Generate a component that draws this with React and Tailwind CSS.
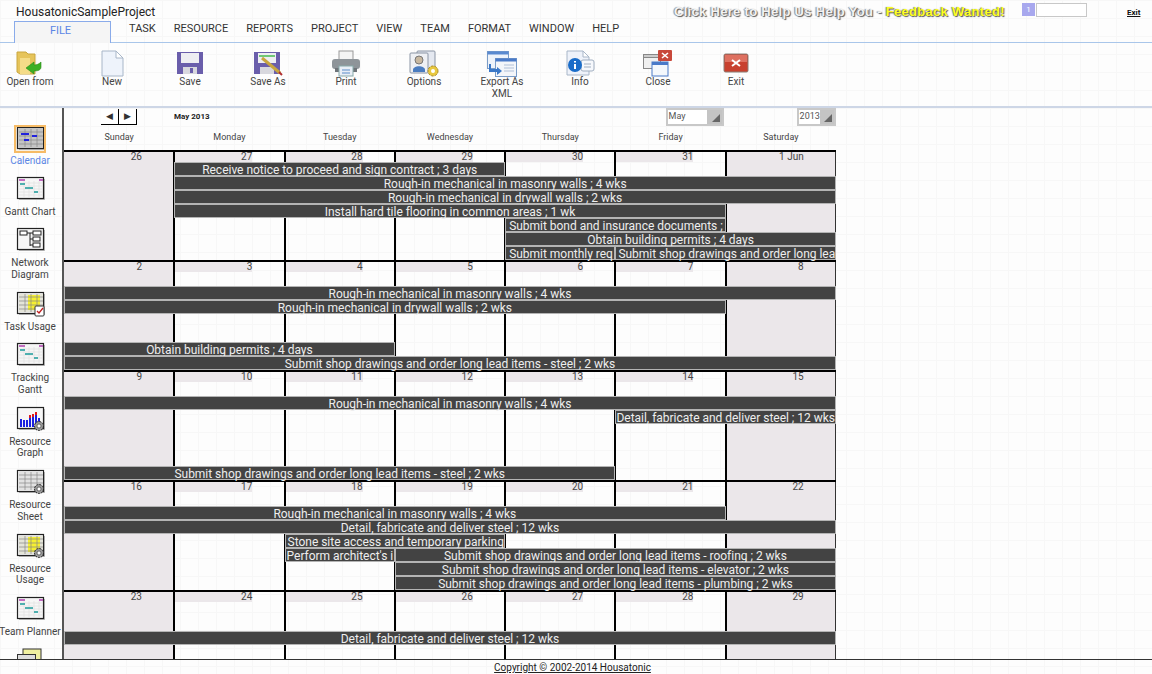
const menus = ["TASK", "RESOURCE", "REPORTS", "PROJECT", "VIEW", "TEAM", "FORMAT", "WINDOW", "HELP"];
const days = ["Sunday", "Monday", "Tuesday", "Wednesday", "Thursday", "Friday", "Saturday"];

const masonry = "Rough-in mechanical in masonry walls ; 4 wks";
const drywall = "Rough-in mechanical in drywall walls ; 2 wks";
const permits = "Obtain building permits ; 4 days";
const steel = "Submit shop drawings and order long lead items - steel ; 2 wks";
const detail = "Detail, fabricate and deliver steel ; 12 wks";

const colStart = ["col-start-1", "col-start-2", "col-start-3", "col-start-4", "col-start-5", "col-start-6", "col-start-7"];
const colSpan = ["", "col-span-1", "col-span-2", "col-span-3", "col-span-4", "col-span-5", "col-span-6", "col-span-7"];
const rowStart = ["row-start-2", "row-start-3", "row-start-4", "row-start-5", "row-start-6", "row-start-7", "row-start-8"];

// [slot, first column, span, text, left padding when left aligned]
const weeks = [
  {
    dates: ["26", "27", "28", "29", "30", "31", "1 Jun"],
    bars: [
      [0, 1, 3, "Receive notice to proceed and sign contract ; 3 days"],
      [1, 1, 6, masonry],
      [2, 1, 6, drywall],
      [3, 1, 5, "Install hard tile flooring in common areas ; 1 wk"],
      [4, 4, 2, "Submit bond and insurance documents ;", "pl-[3px] text-left"],
      [5, 4, 3, permits],
      [6, 4, 1, "Submit monthly req", "pl-[3px] text-left"],
      [6, 5, 2, "Submit shop drawings and order long lea", "pl-[2px] text-left"],
    ],
  },
  {
    dates: ["2", "3", "4", "5", "6", "7", "8"],
    bars: [
      [1, 0, 7, masonry],
      [2, 0, 6, drywall],
      [5, 0, 3, permits],
      [6, 0, 7, steel],
    ],
  },
  {
    dates: ["9", "10", "11", "12", "13", "14", "15"],
    bars: [
      [1, 0, 7, masonry],
      [2, 5, 2, detail],
      [6, 0, 5, steel],
    ],
  },
  {
    dates: ["16", "17", "18", "19", "20", "21", "22"],
    bars: [
      [1, 0, 6, masonry],
      [2, 0, 7, detail],
      [3, 2, 2, "Stone site access and temporary parking", "pl-[2px] text-left"],
      [4, 2, 1, "Perform architect's i", "pl-[1px] text-left"],
      [4, 3, 4, "Submit shop drawings and order long lead items - roofing ; 2 wks"],
      [5, 3, 4, "Submit shop drawings and order long lead items - elevator ; 2 wks"],
      [6, 3, 4, "Submit shop drawings and order long lead items - plumbing ; 2 wks"],
    ],
  },
  {
    dates: ["23", "24", "25", "26", "27", "28", "29"],
    rows: "grid-rows-[10px_14px_15px_repeat(5,14px)]",
    bars: [[2, 0, 7, detail]],
  },
];

const Frame = ({ children, className }) => (
  <svg width="30" height="26" viewBox="0 0 30 26" className={className}>
    <rect x="2.5" y="1.5" width="26" height="21" fill="#f6f6f6" stroke="#222" strokeWidth="1.2" />
    <path d="M4 23.5h25.5V3" fill="none" stroke="#aaa" />
    {children}
  </svg>
);

const GanttLines = () => (
  <>
    <path d="M4 4h6M24 4h4" stroke="#b040b0" strokeWidth="1.5" />
    <path d="M4 7h24M4 10h24M4 13h24M4 16h24M4 19h24M9 5v16M14 5v16M19 5v16M24 5v16" stroke="#ddd" strokeWidth=".6" />
    <path d="M5 8h5M10 12h8M19 16h4" stroke="#1a9a9a" strokeWidth="1.6" />
  </>
);

const GridLines = ({ h = 18 }) => (
  <path d={`M4 6h24M4 10h24M4 14h24M4 18h24M10 3v${h}M16 3v${h}M22 3v${h}`} stroke="#888" strokeWidth=".7" />
);

const Gear = () => (
  <g>
    <circle cx="24" cy="20" r="4.5" fill="#999" stroke="#222" strokeDasharray="2 1" />
    <circle cx="24" cy="20" r="2" fill="#fff" stroke="#333" strokeWidth=".6" />
  </g>
);

const sideItems = [
  {
    label: ["Calendar"],
    active: true,
    icon: (
      <Frame className="mt-[2px] outline-2 -outline-offset-1 outline-[#f6bb66] bg-[#f6f0e4]">
        <rect x="3" y="2" width="25" height="20" fill="#c4c4c4" />
        <GridLines />
        <path d="M6 8h8M17 10h5M9 14h5" stroke="#2222dd" strokeWidth="2" />
      </Frame>
    ),
  },
  { label: ["Gantt Chart"], icon: <Frame><GanttLines /></Frame> },
  {
    label: ["Network", "Diagram"],
    icon: (
      <Frame>
        <path d="M12 6h7M15 6v13M15 12h4M15 18h4" stroke="#222" fill="none" />
        <g fill="#fff" stroke="#222">
          <rect x="5" y="4" width="7" height="4" />
          <rect x="18" y="4" width="8" height="4" />
          <rect x="18" y="10" width="7" height="4" />
          <rect x="18" y="16" width="7" height="4" />
        </g>
      </Frame>
    ),
  },
  {
    label: ["Task Usage"],
    icon: (
      <Frame>
        <rect x="4" y="3" width="24" height="18" fill="#e4e4d8" />
        <rect x="13" y="4" width="12" height="15" fill="#f6f030" />
        <GridLines />
        <rect x="20" y="15" width="9" height="10" rx="1" fill="#fff" stroke="#333" />
        <path d="M22 20l2 2 4-5" fill="none" stroke="#c02020" strokeWidth="1.3" />
      </Frame>
    ),
  },
  { label: ["Tracking", "Gantt"], icon: <Frame><GanttLines /></Frame> },
  {
    label: ["Resource", "Graph"],
    icon: (
      <Frame>
        <path d="M6 13v8M9 14v7M12 14v7M15 11v10M18 10v11" stroke="#1a20e0" strokeWidth="2" />
        <path d="M15 9v3M18 8v3" stroke="#e01818" strokeWidth="2" />
        <path d="M21 8v13M24 12v9" stroke="#1a20e0" strokeWidth="2" />
        <path d="M21 6v3" stroke="#e01818" strokeWidth="2" />
        <Gear />
      </Frame>
    ),
  },
  {
    label: ["Resource", "Sheet"],
    icon: (
      <Frame>
        <rect x="3" y="2" width="25" height="20" fill="#e2e2e2" />
        <GridLines />
        <Gear />
      </Frame>
    ),
  },
  {
    label: ["Resource", "Usage"],
    icon: (
      <Frame>
        <rect x="4" y="3" width="24" height="18" fill="#e4e4d8" />
        <rect x="13" y="4" width="12" height="15" fill="#f6f030" />
        <GridLines />
        <Gear />
      </Frame>
    ),
  },
  { label: ["Team Planner"], icon: <Frame><GanttLines /></Frame> },
  {
    label: [""],
    icon: (
      <svg width="30" height="26" viewBox="0 0 30 26">
        <rect x="8" y="1" width="18" height="22" fill="#f0f0a0" stroke="#333" />
        <rect x="2.5" y="6.5" width="18" height="16" fill="#ddd" stroke="#333" />
      </svg>
    ),
  },
];

const ribbon = [
  {
    label: ["Open from"],
    w: "w-[60px]",
    icon: (
      <svg width="30" height="30" viewBox="0 0 30 30">
        <path d="M2 3h9l2 2h7v20H5L2 23z" fill="#e6c45a" stroke="#c9a63e" />
        <path d="M5 9h10v16H5z" fill="#f4dc88" />
        <path d="M26 13v5c0 3-3 4-7 4v3l-8-6 8-6v3c3 0 5-1 7-3z" fill="#3cb025" stroke="#2a8a1a" strokeWidth=".6" />
      </svg>
    ),
  },
  {
    label: ["New"],
    icon: (
      <svg width="30" height="30" viewBox="0 0 30 30">
        <path d="M5 2h14l7 7v18H5z" fill="#eef3fb" stroke="#a8b6c8" />
        <path d="M19 2v7h7z" fill="#fff" stroke="#a8b6c8" />
      </svg>
    ),
  },
  {
    label: ["Save"],
    icon: (
      <svg width="30" height="30" viewBox="0 0 30 30">
        <path d="M2 3h26v22H2z" fill="#6a5eab" />
        <rect x="6" y="4" width="18" height="10" fill="#eeeef2" />
        <rect x="8" y="18" width="14" height="7" fill="#d8d8de" />
        <rect x="15" y="19" width="3" height="5" fill="#6a5eab" />
      </svg>
    ),
  },
  {
    label: ["Save As"],
    icon: (
      <svg width="32" height="30" viewBox="0 0 32 30">
        <path d="M2 3h26v22H2z" fill="#6a5eab" />
        <rect x="6" y="4" width="18" height="10" fill="#eeeef2" />
        <rect x="7" y="6" width="16" height="2" fill="#70c878" />
        <rect x="8" y="18" width="14" height="7" fill="#d8d8de" />
        <path d="M10 9l18 15" stroke="#c9a63e" strokeWidth="3" />
        <path d="M27 23l3 3" stroke="#b03030" strokeWidth="2" />
      </svg>
    ),
  },
  {
    label: ["Print"],
    icon: (
      <svg width="30" height="30" viewBox="0 0 30 30">
        <rect x="8" y="2" width="14" height="9" fill="#f4f4f4" stroke="#999" />
        <rect x="1" y="10" width="28" height="10" rx="3" fill="#8e9499" />
        <rect x="4" y="19" width="22" height="4" fill="#6e7479" />
        <rect x="8" y="17" width="14" height="10" fill="#e8eef6" stroke="#8aa" />
        <path d="M11 21h8M11 24h8" stroke="#5a8cc8" />
      </svg>
    ),
  },
  {
    label: ["Options"],
    icon: (
      <svg width="32" height="30" viewBox="0 0 32 30">
        <rect x="9" y="2" width="18" height="18" rx="1" fill="#e4e8f0" stroke="#8a94a4" />
        <rect x="2" y="4" width="18" height="20" rx="1" fill="#eef0f4" stroke="#8a94a4" />
        <circle cx="11" cy="11" r="4" fill="#c8b8a0" stroke="#777" />
        <path d="M5 21c0-5 12-5 12 0v2H5z" fill="#4a7cc0" />
        <circle cx="25" cy="22" r="5" fill="#e8c840" stroke="#a88a20" strokeDasharray="2.5 1" />
        <circle cx="25" cy="22" r="2" fill="#fff" />
      </svg>
    ),
  },
  {
    label: ["Export As", "XML"],
    icon: (
      <svg width="32" height="30" viewBox="0 0 32 30">
        <rect x="1.5" y="2.5" width="21" height="17" fill="#eef3fa" stroke="#7a9cc8" />
        <rect x="1.5" y="2.5" width="21" height="3" fill="#5a8ad0" />
        <rect x="9.5" y="9.5" width="21" height="18" fill="#f4f6fa" stroke="#7a9cc8" />
        <rect x="9.5" y="9.5" width="21" height="3" fill="#4a7ac8" />
        <path d="M5 15v5h6v-2l5 4-5 4v-3H3v-8z" fill="#3a78c8" />
        <path d="M18 16h10M18 19h10M18 22h10" stroke="#b0c0d8" />
      </svg>
    ),
  },
  {
    label: ["Info"],
    icon: (
      <svg width="32" height="30" viewBox="0 0 32 30">
        <path d="M3 2h16l6 6v18H3z" fill="#eef2fa" stroke="#a8b6c8" />
        <path d="M19 2v6h6z" fill="#fff" stroke="#a8b6c8" />
        <rect x="17" y="11" width="13" height="11" rx="2" fill="#f6f8fc" stroke="#a0aec0" />
        <path d="M20 15h7M20 18h7" stroke="#a0aec0" />
        <circle cx="11" cy="16" r="7" fill="#1a6cc8" />
        <path d="M11 15v5M11 12v1.4" stroke="#fff" strokeWidth="2" />
      </svg>
    ),
  },
  {
    label: ["Close"],
    icon: (
      <svg width="32" height="30" viewBox="0 0 32 30">
        <rect x="1.5" y="5.5" width="17" height="14" fill="#f0f0f0" stroke="#888" />
        <rect x="1.5" y="5.5" width="17" height="3" fill="#ccc" stroke="#888" />
        <rect x="10" y="13" width="16" height="14" fill="#f4f8fc" stroke="#4a7ac8" />
        <rect x="10" y="13" width="16" height="3" fill="#4a7ac8" />
        <rect x="16" y="1" width="14" height="11" rx="1" fill="#c8483a" />
        <path d="M20 4l6 5M26 4l-6 5" stroke="#fff" strokeWidth="1.6" />
      </svg>
    ),
  },
  {
    label: ["Exit"],
    icon: (
      <svg width="30" height="30" viewBox="0 0 30 30">
        <rect x="3" y="5" width="24" height="18" rx="1.5" fill="#c8402e" stroke="#8a8078" />
        <rect x="4" y="6" width="22" height="7" fill="#de7060" />
        <path d="M11 11l8 6M19 11l-8 6" stroke="#fff" strokeWidth="2" />
      </svg>
    ),
  },
];

const Week = ({ week }) => (
  <div className={`grid grid-cols-7 ${week.rows || "grid-rows-[10px_repeat(7,14px)]"} border-t-2 border-black`}>
    {week.dates.map((date, i) => {
      const weekend = i === 0 || i === 6;
      return (
        <div
          key={date}
          className={`${colStart[i]} row-start-1 row-span-8 ${i === 0 ? "" : "border-l-2 border-black -ml-[1px]"} ${i === 6 ? "border-r border-r-[#333]" : ""} ${weekend ? "bg-[#ebe7ea]" : ""}`}
        >
          <div className={`${i === 0 ? "w-[78px]" : "w-[77px]"} h-[10px] text-right text-[10px] leading-[9px] text-[#444] ${weekend ? "" : "bg-[#ebe7ea]"}`}>{date}</div>
        </div>
      );
    })}
    {week.bars.map(([slot, col, span, text, align]) => (
      <div
        key={`${slot}-${col}`}
        className={`${rowStart[slot]} ${colStart[col]} ${colSpan[span]} z-10 h-[14px] border border-[#b4b4b4] bg-[#434343] text-[#eeeeee] text-[12px] leading-[14px] tracking-[-0.02px] whitespace-nowrap overflow-x-clip ${align || "text-center"}`}
      >
        {text}
      </div>
    ))}
  </div>
);

const SelectBox = ({ value, className }) => (
  <div className={`${className} h-[18px] border-2 border-[#c8c8c8] bg-white flex justify-between text-[9px] leading-[12px] pl-[1px] text-[#555]`}>
    {value}
    <span className="w-[15px] bg-[#c4c4c4] flex items-end justify-end p-[2px]">
      <svg width="8" height="8" viewBox="0 0 8 8">
        <path d="M8 0v8H0z" fill="#666" />
      </svg>
    </span>
  </div>
);

export default function App() {
  return (
    <div className="h-[674px] w-[1152px] overflow-hidden flex flex-col bg-[#fdfdfd] bg-[linear-gradient(#f7f7f7_1px,transparent_1px),linear-gradient(90deg,#f7f7f7_1px,transparent_1px)] bg-[size:18px_18px] text-[#333] font-['Roboto',sans-serif]">
      <header className="h-[43px] shrink-0 border-b border-[#a9c6ea]">
        <div className="flex h-[21px] items-start">
          <div className="w-[674px] pl-4 pt-[4px] text-[12px] leading-[16px] text-[#222]">HousatonicSampleProject</div>
          <div className="w-[348px] pt-[4px] text-[13px] leading-[16px] font-bold tracking-[0.3px] whitespace-nowrap text-[#f2f2f2] [text-shadow:1px_1px_1px_#555,-1px_0_1px_#888] font-['Liberation_Sans',sans-serif]">
            Click Here to Help Us Help You - <span className="text-[#ffff20]">Feedback Wanted!</span>
          </div>
          <div className="w-[105px] pt-[3px] flex">
            <div className="w-[13px] h-[13px] bg-[#a8a8ee] text-white text-[8px] leading-[13px] text-center">1</div>
            <div className="w-[51px] h-[14px] border border-[#c8c8c8] bg-white ml-[1px]" />
          </div>
          <div className="pt-[8px] text-[8px] leading-[9px] font-bold text-[#111] underline">Exit</div>
        </div>
        <div className="flex items-start pl-[14px]">
          <div className="w-[97px] h-[22px] border border-b-0 border-[#8aabea] bg-[#f5f5f5] text-[#5b86e5] text-[11px] leading-[18px] pr-[4px] text-center">FILE</div>
          <nav className="flex gap-[18px] ml-[18px]">
            {menus.map((menu) => (
              <span key={menu} className="text-[11px] leading-[16px] text-[#333]">{menu}</span>
            ))}
          </nav>
        </div>
      </header>

      <div className="h-[65px] shrink-0 border-b-2 border-[#cdd6e6] flex pt-[6px]">
        {ribbon.map((item) => (
          <div key={item.label[0]} className={`${item.w || "w-[78px]"} flex flex-col items-center text-[10px] leading-[12px] text-[#444] first:mr-[13px]`}>
            <div className="h-[27px] overflow-visible">{item.icon}</div>
            {item.label.map((line) => (
              <span key={line}>{line}</span>
            ))}
          </div>
        ))}
      </div>

      <div className="flex flex-1 min-h-0">
        <aside className="w-[64px] shrink-0 border-r-2 border-[#555] overflow-hidden pt-[16px] pr-[2px]">
          {sideItems.map((item) => (
            <div key={item.label[0]} className={`flex flex-col items-center text-[10px] leading-[11.5px] ${item.label.length > 1 ? "h-[63.5px]" : "h-[51.5px]"}`}>
              <div className="h-[29px]">{item.icon}</div>
              <span className={`${item.active ? "mt-[2px] text-[#5b86e5]" : "mt-[1px] text-[#444]"} whitespace-nowrap`}>{item.label[0]}</span>
              {item.label[1] && <span className="whitespace-nowrap text-[#444]">{item.label[1]}</span>}
            </div>
          ))}
        </aside>

        <main className="w-[772px] shrink-0 overflow-hidden">
          <div className="h-[18px] flex items-center">
            <div className="ml-[37px] flex h-[16px]">
              <button className="w-[18px] bg-white border-r border-b border-black text-[9px] leading-none">◀</button>
              <button className="w-[18px] bg-white border-r border-b border-black text-[9px] leading-none">▶</button>
            </div>
            <span className="ml-[37px] text-[8px] font-bold text-[#222]">May 2013</span>
            <SelectBox value="May" className="ml-[456px] w-[58px]" />
            <SelectBox value="2013" className="ml-[73px] w-[39px]" />
          </div>
          <div className="grid grid-cols-7 h-[24px] items-center">
            {days.map((day) => (
              <div key={day} className="text-center text-[9px] text-[#444]">{day}</div>
            ))}
          </div>
          {weeks.map((week) => (
            <Week key={week.dates[0]} week={week} />
          ))}
        </main>
      </div>

      <footer className="h-[15px] shrink-0 border-t border-[#333] pr-[7px] text-center text-[10px] leading-[15px] text-[#222] underline">
        Copyright © 2002-2014 Housatonic
      </footer>
    </div>
  );
}
